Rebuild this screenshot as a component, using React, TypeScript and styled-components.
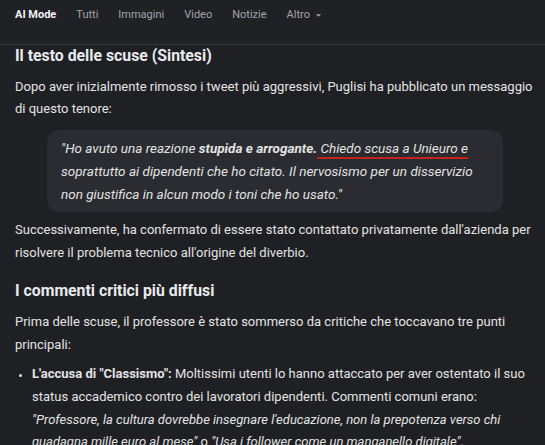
import styled, { createGlobalStyle } from "styled-components";

const GlobalStyle = createGlobalStyle`
  html, body {
    margin: 0;
    padding: 0;
    background: #1f2023;
  }
  body {
    font-family: Roboto, "Liberation Sans", Arial, sans-serif;
    color: #e8eaed;
  }
`;

const tabs = ["AI Mode", "Tutti", "Immagini", "Video", "Notizie"];

const App = () => {
  return (
    <Page>
      <GlobalStyle />
      <NavBar>
        {tabs.map((tab, index) => (
          <Tab key={tab} $active={index === 0}>
            {tab}
          </Tab>
        ))}
        <Tab>
          Altro
          <Caret viewBox="0 0 10 10">
            <path d="M2 3.5 L8 3.5 L5 6.5 Z" fill="currentColor" />
          </Caret>
        </Tab>
      </NavBar>
      <Content>
        <Heading>Il testo delle scuse (Sintesi)</Heading>
        <Paragraph>
          Dopo aver inizialmente rimosso i tweet più aggressivi, Puglisi ha pubblicato un messaggio di
          questo tenore:
        </Paragraph>
        <Quote>
          "Ho avuto una reazione <strong>stupida e arrogante.</strong>
          <Marked> Chiedo scusa a Unieuro e</Marked> soprattutto ai dipendenti che ho citato. Il
          nervosismo per un disservizio non giustifica in alcun modo i toni che ho usato."
        </Quote>
        <Paragraph>
          Successivamente, ha confermato di essere stato contattato privatamente dall'azienda per
          risolvere il problema tecnico all'origine del diverbio.
        </Paragraph>
        <Heading $spaced>I commenti critici più diffusi</Heading>
        <Paragraph>
          Prima delle scuse, il professore è stato sommerso da critiche che toccavano tre punti
          principali:
        </Paragraph>
        <List>
          <Item>
            <strong>L'accusa di "Classismo":</strong> Moltissimi utenti lo hanno attaccato per aver
            ostentato il suo status accademico contro dei lavoratori dipendenti. Commenti comuni erano:{" "}
            <em>
              "Professore, la cultura dovrebbe insegnare l'educazione, non la prepotenza verso chi
              guadagna mille euro al mese"
            </em>{" "}
            o <em>"Usa i follower come un manganello digitale"</em>.
          </Item>
        </List>
      </Content>
    </Page>
  );
};

export default App;

/*
Styles
*/

const Page = styled.div`
  width: 545px;
  height: 445px;
  overflow: hidden;
  background: #1f2023;
`;

const NavBar = styled.nav`
  display: flex;
  align-items: flex-start;
  gap: 20px;
  height: 36px;
  padding: 8px 0 0 15px;
  border-bottom: 1px solid #36383c;
  background: #202124;
`;

const Tab = styled.span<{ $active?: boolean }>`
  display: flex;
  align-items: center;
  font-size: 11px;
  line-height: 14px;
  font-weight: ${(p) => (p.$active ? 700 : 400)};
  color: ${(p) => (p.$active ? "#f1f3f4" : "#a0a4aa")};
`;

const Caret = styled.svg`
  width: 9px;
  height: 9px;
  margin-left: 4px;
`;

const Content = styled.div`
  padding: 0 7px 0 15px;
`;

const Heading = styled.h2<{ $spaced?: boolean }>`
  margin: ${(p) => (p.$spaced ? "15.5px" : "0")} 0 ${(p) => (p.$spaced ? "9px" : "8.5px")};
  font-size: 15.8px;
  line-height: 22px;
  font-weight: 700;
  color: #e8eaed;
`;

const Paragraph = styled.p`
  margin: 0;
  font-size: 13px;
  line-height: 22.7px;
  color: #e3e3e3;
`;

const Quote = styled.blockquote`
  box-sizing: border-box;
  width: 456px;
  margin: 9px 0 7px 32px;
  padding: 7px 14px 6px;
  border-radius: 12px;
  background: #2a2c31;
  font-size: 13.5px;
  line-height: 23px;
  font-style: italic;
  color: #e3e3e3;

  strong {
    font-weight: 700;
  }
`;

const Marked = styled.span`
  text-decoration: underline;
  text-decoration-color: #c5221f;
  text-decoration-thickness: 2px;
  text-underline-offset: 4px;
`;

const List = styled.ul`
  margin: 7px 0 0;
  padding: 0 0 0 17px;
`;

const Item = styled.li`
  font-size: 13px;
  line-height: 22.7px;
  color: #e3e3e3;

  &::marker {
    font-size: 11px;
  }
`;
